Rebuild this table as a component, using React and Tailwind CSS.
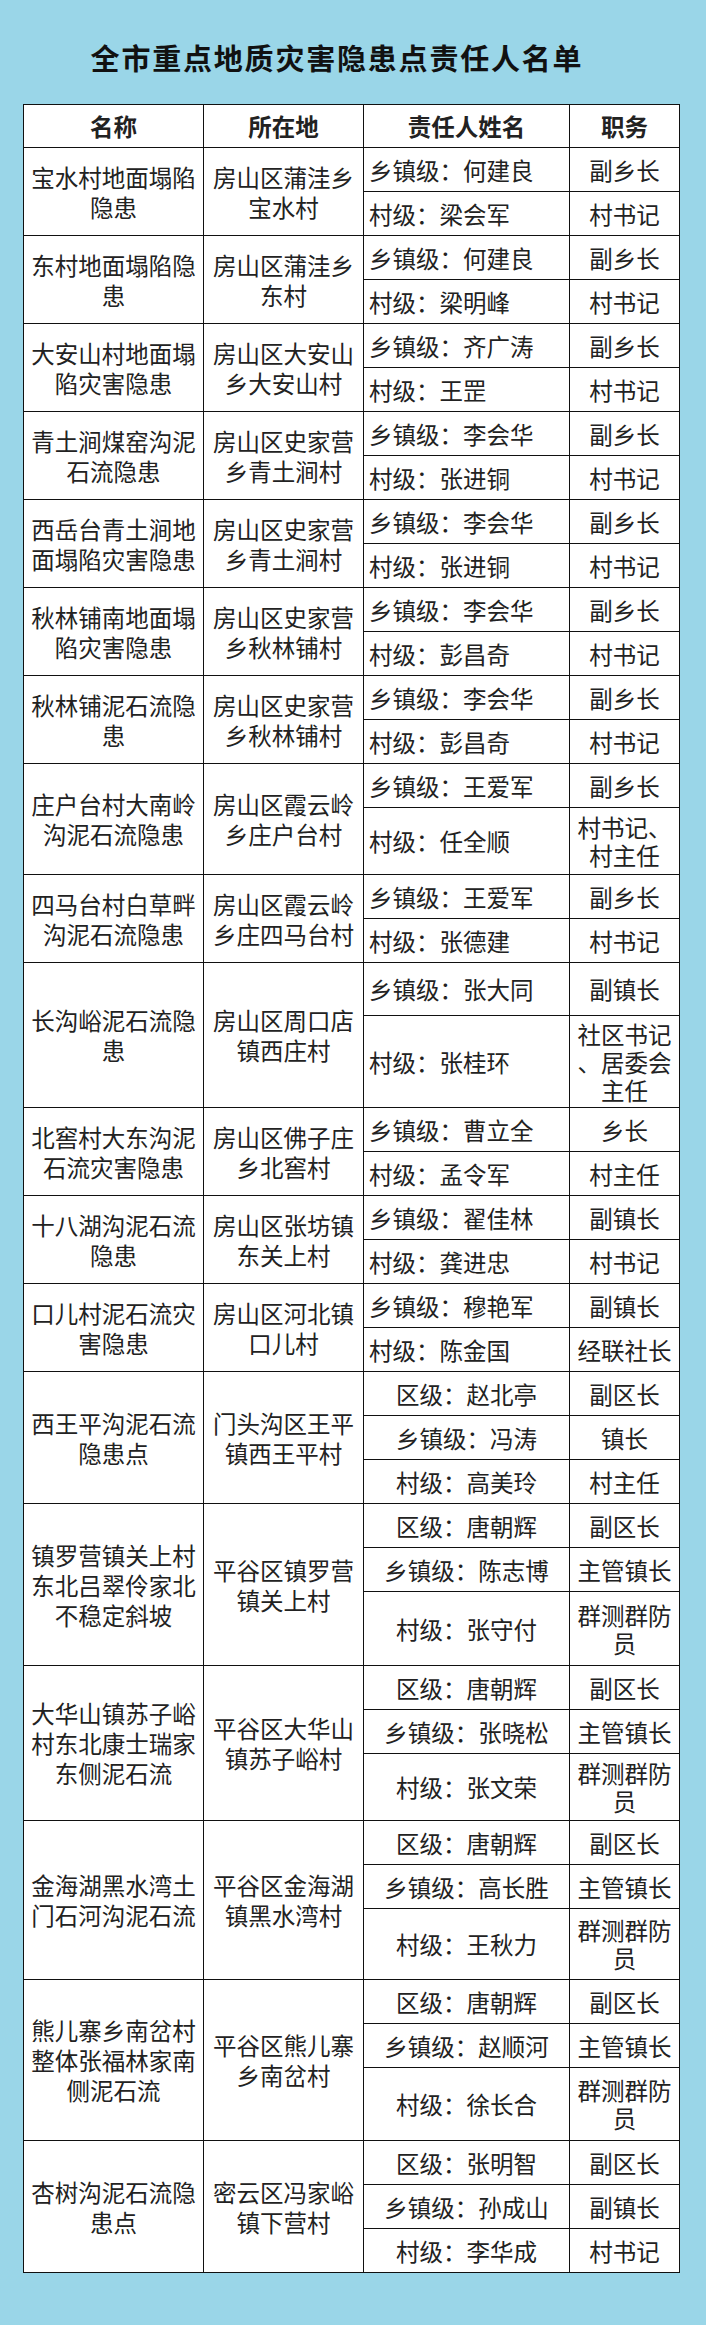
import React from 'react';

const rows = [
    { name: '宝水村地面塌陷隐患', place: '房山区蒲洼乡宝水村', people: [['乡镇级：何建良', '副乡长'], ['村级：梁会军', '村书记']] },
    { name: '东村地面塌陷隐患', place: '房山区蒲洼乡东村', people: [['乡镇级：何建良', '副乡长'], ['村级：梁明峰', '村书记']] },
    { name: '大安山村地面塌陷灾害隐患', place: '房山区大安山乡大安山村', people: [['乡镇级：齐广涛', '副乡长'], ['村级：王罡', '村书记']] },
    { name: '青土涧煤窑沟泥石流隐患', place: '房山区史家营乡青土涧村', people: [['乡镇级：李会华', '副乡长'], ['村级：张进铜', '村书记']] },
    { name: '西岳台青土涧地面塌陷灾害隐患', place: '房山区史家营乡青土涧村', people: [['乡镇级：李会华', '副乡长'], ['村级：张进铜', '村书记']] },
    { name: '秋林铺南地面塌陷灾害隐患', place: '房山区史家营乡秋林铺村', people: [['乡镇级：李会华', '副乡长'], ['村级：彭昌奇', '村书记']] },
    { name: '秋林铺泥石流隐患', place: '房山区史家营乡秋林铺村', people: [['乡镇级：李会华', '副乡长'], ['村级：彭昌奇', '村书记']] },
    { name: '庄户台村大南岭沟泥石流隐患', place: '房山区霞云岭乡庄户台村', people: [['乡镇级：王爱军', '副乡长'], ['村级：任全顺', '村书记、村主任', 'h-[67px]']] },
    { name: '四马台村白草畔沟泥石流隐患', place: '房山区霞云岭乡庄四马台村', people: [['乡镇级：王爱军', '副乡长'], ['村级：张德建', '村书记']] },
    { name: '长沟峪泥石流隐患', place: '房山区周口店镇西庄村', people: [['乡镇级：张大同', '副镇长', 'h-[53px]'], ['村级：张桂环', '社区书记、居委会主任', 'h-[92px]', '[line-break:anywhere]']] },
    { name: '北窖村大东沟泥石流灾害隐患', place: '房山区佛子庄乡北窖村', people: [['乡镇级：曹立全', '乡长'], ['村级：孟令军', '村主任']] },
    { name: '十八湖沟泥石流隐患', place: '房山区张坊镇东关上村', people: [['乡镇级：翟佳林', '副镇长'], ['村级：龚进忠', '村书记']] },
    { name: '口儿村泥石流灾害隐患', place: '房山区河北镇口儿村', people: [['乡镇级：穆艳军', '副镇长'], ['村级：陈金国', '经联社长']] },
    { name: '西王平沟泥石流隐患点', place: '门头沟区王平镇西王平村', people: [['区级：赵北亭', '副区长'], ['乡镇级：冯涛', '镇长'], ['村级：高美玲', '村主任']] },
    { name: '镇罗营镇关上村东北吕翠伶家北不稳定斜坡', place: '平谷区镇罗营镇关上村', people: [['区级：唐朝辉', '副区长'], ['乡镇级：陈志博', '主管镇长'], ['村级：张守付', '群测群防员', 'h-[74px]']] },
    { name: '大华山镇苏子峪村东北康士瑞家东侧泥石流', place: '平谷区大华山镇苏子峪村', people: [['区级：唐朝辉', '副区长'], ['乡镇级：张晓松', '主管镇长'], ['村级：张文荣', '群测群防员', 'h-[67px]']] },
    { name: '金海湖黑水湾土门石河沟泥石流', place: '平谷区金海湖镇黑水湾村', people: [['区级：唐朝辉', '副区长'], ['乡镇级：高长胜', '主管镇长'], ['村级：王秋力', '群测群防员', 'h-[71px]']] },
    { name: '熊儿寨乡南岔村整体张福林家南侧泥石流', place: '平谷区熊儿寨乡南岔村', people: [['区级：唐朝辉', '副区长'], ['乡镇级：赵顺河', '主管镇长'], ['村级：徐长合', '群测群防员', 'h-[73px]']] },
    { name: '杏树沟泥石流隐患点', place: '密云区冯家峪镇下营村', people: [['区级：张明智', '副区长'], ['乡镇级：孙成山', '副镇长'], ['村级：李华成', '村书记']] },
];

const cell = 'border border-[#111] bg-white p-0 align-middle';

const App = () => {
    return (
        <div className='min-h-screen bg-[#9ad6e8] font-["Noto_Sans_CJK_SC",sans-serif] text-[#222]'>
            <h1 className='pt-[37px] pr-[32px] text-center text-[29px] leading-[40px] tracking-[1.8px] font-bold text-[#111]'>
                全市重点地质灾害隐患点责任人名单
            </h1>
            <table className='mt-[27px] ml-[23px] w-[656px] table-fixed border-collapse text-[23.5px]'>
                <colgroup>
                    <col className='w-[180px]' />
                    <col className='w-[160px]' />
                    <col className='w-[206px]' />
                    <col className='w-[110px]' />
                </colgroup>
                <thead>
                    <tr className='h-[43px]'>
                        <th className={`${cell} font-bold leading-[30px]`}>名称</th>
                        <th className={`${cell} font-bold leading-[30px]`}>所在地</th>
                        <th className={`${cell} font-bold leading-[30px]`}>责任人姓名</th>
                        <th className={`${cell} font-bold leading-[30px]`}>职务</th>
                    </tr>
                </thead>
                <tbody>
                    {rows.map((row) => {
                        const three = row.people.length === 3;
                        return row.people.map(([who, job, h, extra], i) => (
                            <tr key={row.name + i} className={h || 'h-[44px]'}>
                                {i === 0 && (
                                    <>
                                        <td rowSpan={row.people.length} className={`${cell} px-[5px] text-center leading-[30px]`}>
                                            {row.name}
                                        </td>
                                        <td rowSpan={row.people.length} className={`${cell} px-[5px] text-center leading-[30px]`}>
                                            {row.place}
                                        </td>
                                    </>
                                )}
                                <td className={`${cell} leading-[30px] whitespace-nowrap ${three ? 'text-center' : 'text-left pl-[5px]'}`}>
                                    {who}
                                </td>
                                <td className={`${cell} px-[4px] text-center leading-[28px] ${extra || ''}`}>
                                    {job}
                                </td>
                            </tr>
                        ));
                    })}
                </tbody>
            </table>
        </div>
    );
};

export default App;
